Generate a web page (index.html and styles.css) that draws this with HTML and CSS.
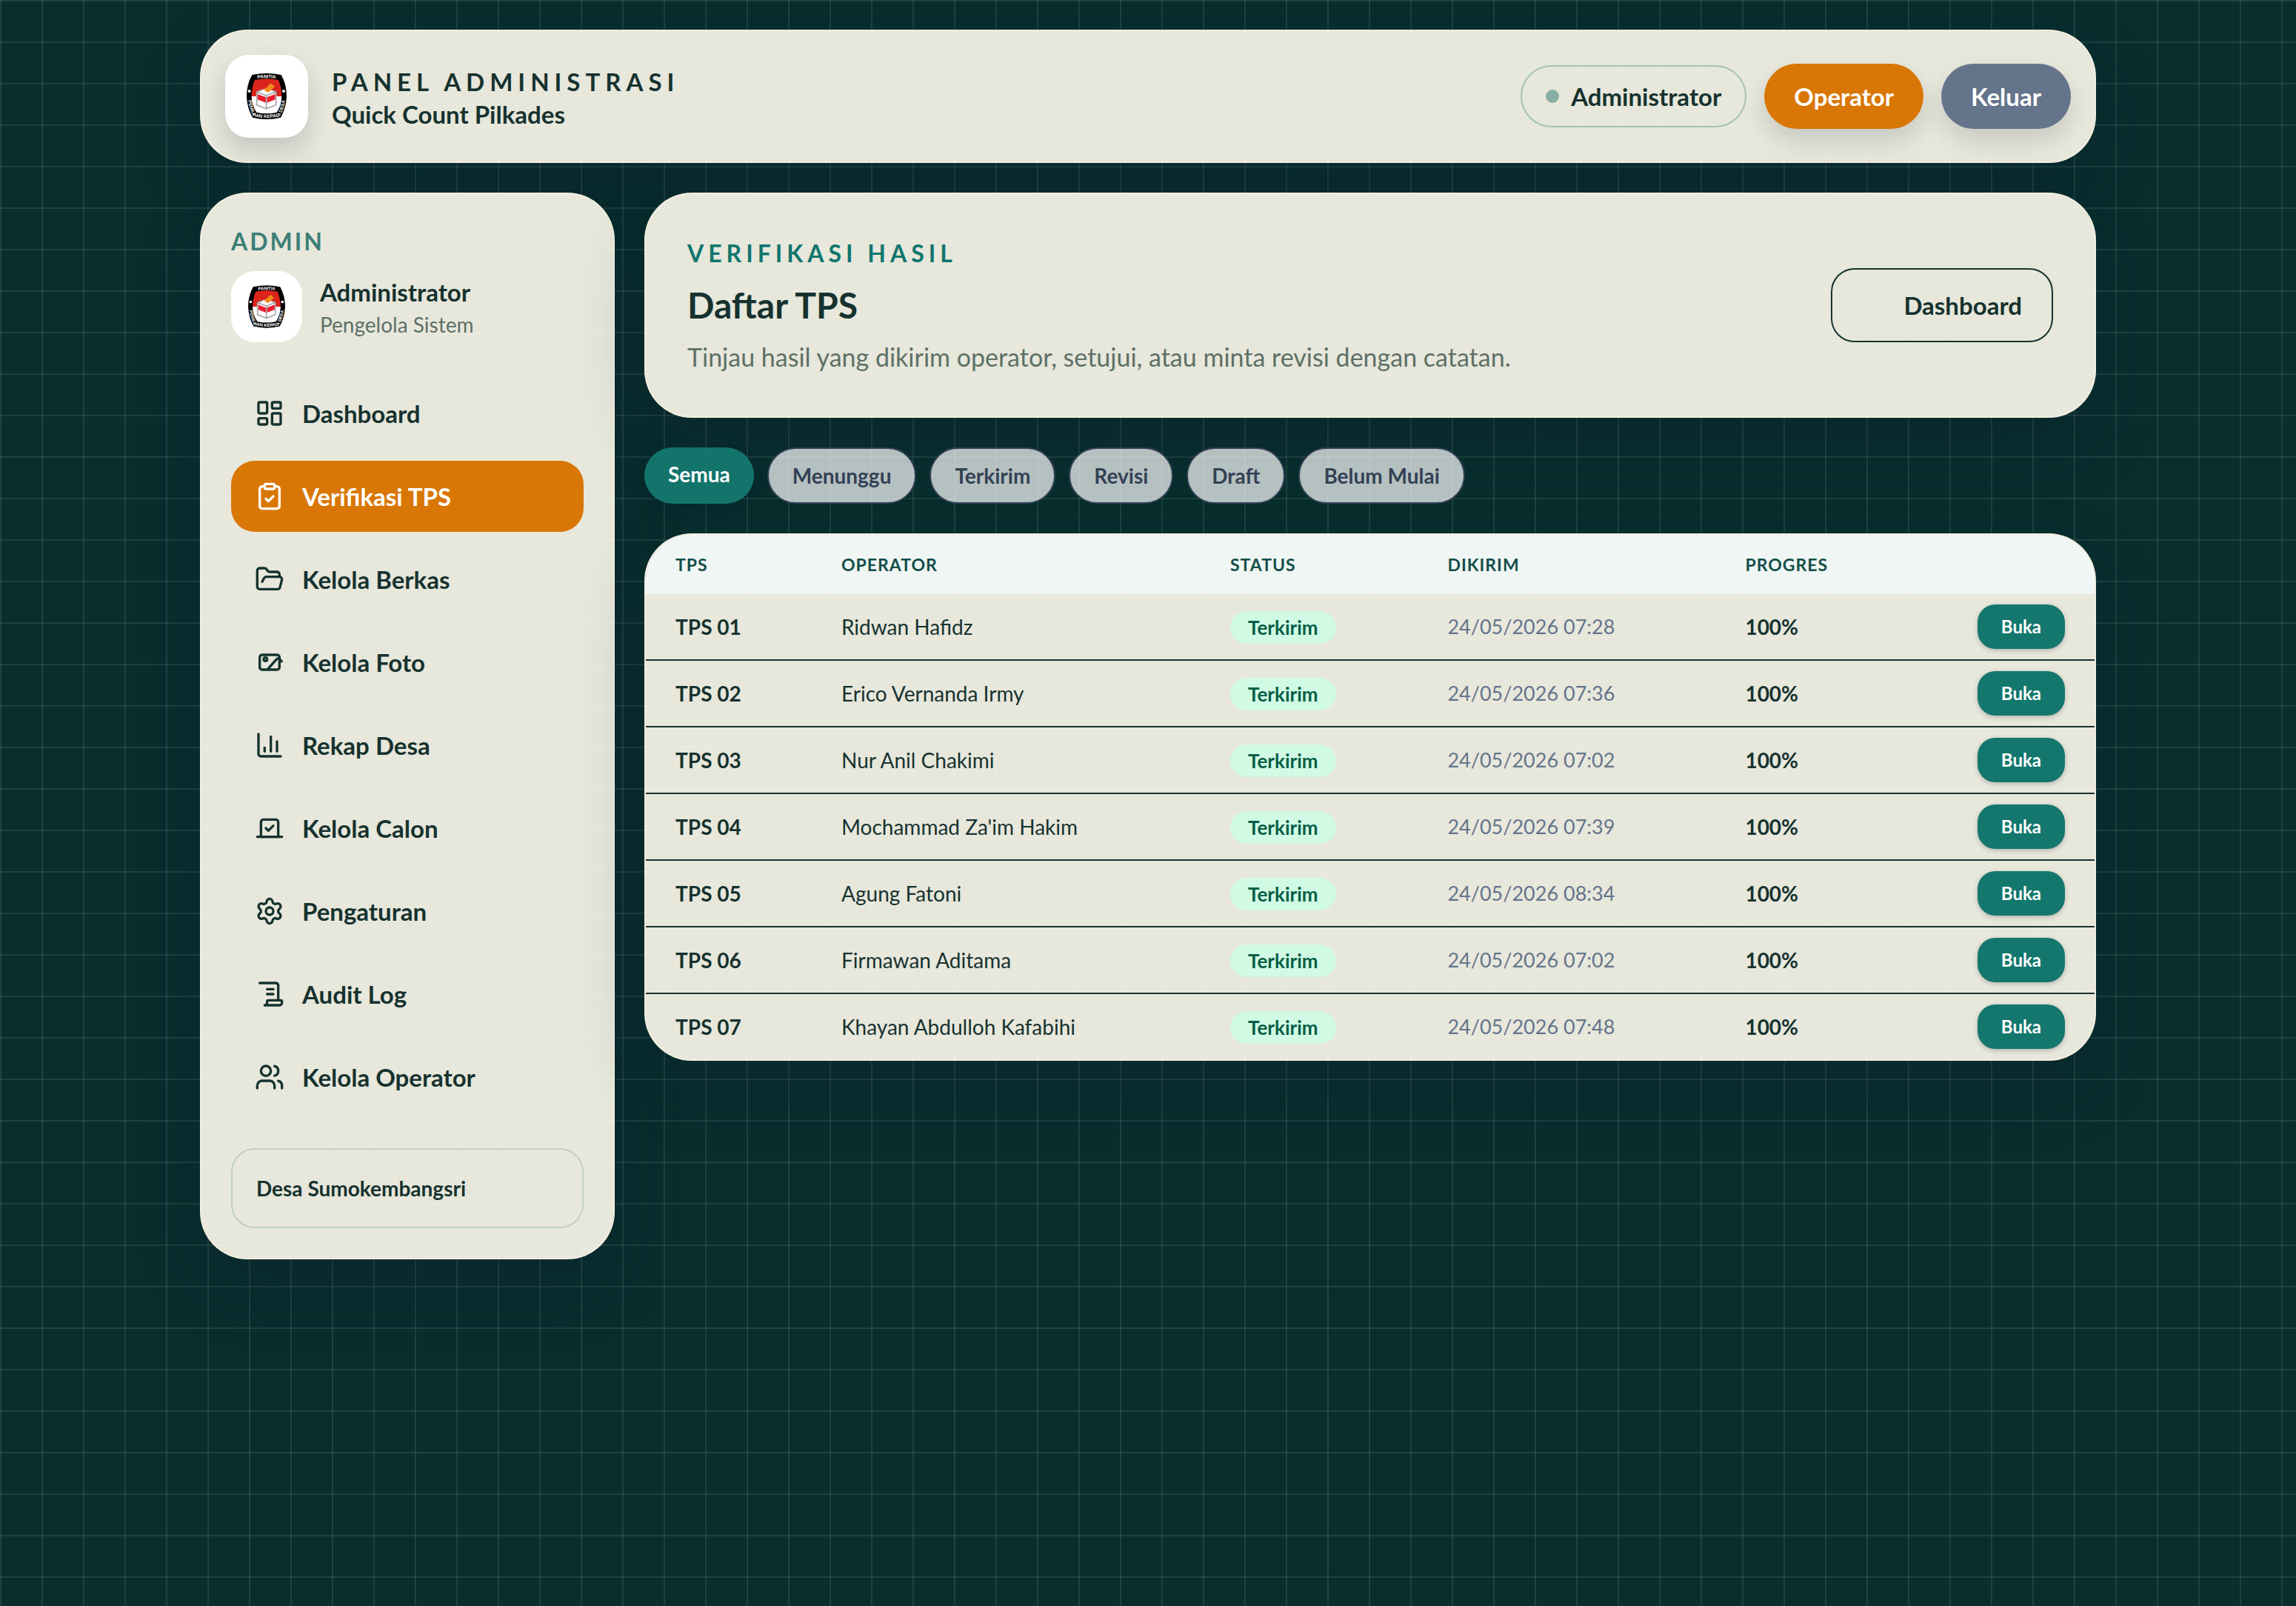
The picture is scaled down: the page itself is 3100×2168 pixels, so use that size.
FILE: index.html
```html
<!DOCTYPE html>
<html lang="id">
<head>
    <meta charset="utf-8">
    <meta name="viewport" content="width=device-width, initial-scale=1">
    <title>Daftar TPS - Quick Count Pilkades</title>
    <link rel="stylesheet" href="styles.css">
</head>
<body>
    <div class="page">
        <header class="panel topbar">
            <div class="logo-box logo-lg">
                <!-- logo panitia, dipakai lagi di sidebar -->
                <svg class="logo" viewBox="0 0 162 186">
                    <g id="logo">
                        <path d="M22 6Q81 -6 140 6Q162 45 162 93Q160 142 138 179Q81 193 24 179Q2 142 0 93Q0 45 22 6Z" fill="#000"/>
                        <path d="M33 27Q81 17 129 27Q142 60 142 93H20Q20 60 33 27Z" fill="#dc241c"/>
                        <path d="M20 93H142Q142 128 122 158Q81 168 40 158Q20 128 20 93Z" fill="#fff"/>
                        <path d="M41 75L80 60L119 75V128L80 143L41 128Z" fill="#fff"/>
                        <path d="M44 84L78 97V119L44 106ZM116 84L82 97V119L116 106Z" fill="#ed1c2e"/>
                        <path d="M41 75L80 90L119 75V128L80 143L41 128ZM80 90V143M41 75L64 66M119 75L104 69" fill="none" stroke="#a3a3a3" stroke-width="5" stroke-linejoin="round"/>
                        <path d="M70 68L98 40L114 54L88 78Z" fill="#f28a1c"/>
                        <circle cx="11" cy="72" r="6" fill="#fff"/>
                        <circle cx="150" cy="72" r="6" fill="#fff"/>
                        <path id="arc-top" d="M20 24Q81 14 142 24" fill="none"/>
                        <path id="arc-bottom" d="M4 92Q8 142 28 174Q81 187 134 174Q154 142 158 92" fill="none"/>
                        <text class="logo-text"><textPath href="#arc-top" startOffset="50%" text-anchor="middle">PANITIA</textPath></text>
                        <text class="logo-text"><textPath href="#arc-bottom" startOffset="50%" text-anchor="middle">PEMILIHAN KEPALA DESA</textPath></text>
                    </g>
                </svg>
            </div>
            <div class="brand">
                <p class="brand-name">PANEL ADMINISTRASI</p>
                <p class="brand-sub">Quick Count Pilkades</p>
            </div>
            <div class="actions">
                <span class="user-pill"><i class="dot"></i>Administrator</span>
                <a href="#" class="btn btn-orange">Operator</a>
                <button type="button" class="btn btn-slate">Keluar</button>
            </div>
        </header>

        <div class="columns">
            <aside class="panel sidebar">
                <p class="side-title">ADMIN</p>
                <div class="profile">
                    <div class="logo-box logo-sm"><svg class="logo" viewBox="0 0 162 186"><use href="#logo"/></svg></div>
                    <div>
                        <p class="profile-name">Administrator</p>
                        <p class="profile-role">Pengelola Sistem</p>
                    </div>
                </div>
                <nav class="menu">
                    <a href="#">
                        <svg class="icon" viewBox="0 0 24 24"><rect x="3" y="3" width="7" height="9" rx="1"/><rect x="14" y="3" width="7" height="5" rx="1"/><rect x="14" y="12" width="7" height="9" rx="1"/><rect x="3" y="16" width="7" height="5" rx="1"/></svg>
                        Dashboard
                    </a>
                    <a href="#" class="active">
                        <svg class="icon" viewBox="0 0 24 24"><rect x="8" y="2" width="8" height="4" rx="1"/><path d="M16 4h2a2 2 0 0 1 2 2v14a2 2 0 0 1-2 2H6a2 2 0 0 1-2-2V6a2 2 0 0 1 2-2h2"/><path d="m9 14 2 2 4-4"/></svg>
                        Verifikasi TPS
                    </a>
                    <a href="#">
                        <svg class="icon" viewBox="0 0 24 24"><path d="m6 14 1.5-2.9A2 2 0 0 1 9.24 10H20a2 2 0 0 1 1.94 2.5l-1.54 6a2 2 0 0 1-1.95 1.5H4a2 2 0 0 1-2-2V5a2 2 0 0 1 2-2h3.9a2 2 0 0 1 1.69.9l.81 1.2a2 2 0 0 0 1.67.9H18a2 2 0 0 1 2 2v2"/></svg>
                        Kelola Berkas
                    </a>
                    <a href="#">
                        <svg class="icon" viewBox="0 0 24 24"><rect x="4" y="6" width="16" height="12" rx="2"/><circle cx="8.6" cy="9.6" r="1.4"/><path d="M11 17 17.8 9.4a1.4 1.4 0 0 1 2.1 0L21.8 11.2"/></svg>
                        Kelola Foto
                    </a>
                    <a href="#">
                        <svg class="icon" viewBox="0 0 24 24"><path d="M3 3v16a2 2 0 0 0 2 2h16"/><path d="M18 17V9"/><path d="M13 17V5"/><path d="M8 17v-3"/></svg>
                        Rekap Desa
                    </a>
                    <a href="#">
                        <svg class="icon" viewBox="0 0 24 24"><path d="m9 12 2 2 4-4"/><path d="M5 7c0-1.1.9-2 2-2h10a2 2 0 0 1 2 2v12H5V7Z"/><path d="M22 19H2"/></svg>
                        Kelola Calon
                    </a>
                    <a href="#">
                        <svg class="icon" viewBox="0 0 24 24"><path d="M9.671 4.136a2.34 2.34 0 0 1 4.659 0 2.34 2.34 0 0 0 3.319 1.915 2.34 2.34 0 0 1 2.33 4.033 2.34 2.34 0 0 0 0 3.831 2.34 2.34 0 0 1-2.33 4.033 2.34 2.34 0 0 0-3.319 1.915 2.34 2.34 0 0 1-4.659 0 2.34 2.34 0 0 0-3.32-1.915 2.34 2.34 0 0 1-2.33-4.033 2.34 2.34 0 0 0 0-3.831A2.34 2.34 0 0 1 6.35 6.051a2.34 2.34 0 0 0 3.319-1.915"/><circle cx="12" cy="12" r="3"/></svg>
                        Pengaturan
                    </a>
                    <a href="#">
                        <svg class="icon" viewBox="0 0 24 24"><path d="M15 12h-5"/><path d="M15 8h-5"/><path d="M19 17V5a2 2 0 0 0-2-2H4"/><path d="M8 21h12a2 2 0 0 0 2-2v-1a1 1 0 0 0-1-1H11a1 1 0 0 0-1 1v1a2 2 0 0 1-2 2"/></svg>
                        Audit Log
                    </a>
                    <a href="#">
                        <svg class="icon" viewBox="0 0 24 24"><path d="M16 21v-2a4 4 0 0 0-4-4H6a4 4 0 0 0-4 4v2"/><circle cx="9" cy="7" r="4"/><path d="M22 21v-2a4 4 0 0 0-3-3.87"/><path d="M16 3.13a4 4 0 0 1 0 7.75"/></svg>
                        Kelola Operator
                    </a>
                </nav>
                <div class="village">Desa Sumokembangsri</div>
            </aside>

            <main class="main">
                <section class="panel hero">
                    <div>
                        <p class="hero-label">VERIFIKASI HASIL</p>
                        <h1>Daftar TPS</h1>
                        <p class="hero-desc">Tinjau hasil yang dikirim operator, setujui, atau minta revisi dengan catatan.</p>
                    </div>
                    <a href="#" class="btn-outline"><span class="icon-slot"></span>Dashboard</a>
                </section>

                <nav class="tabs">
                    <a href="#" class="active">Semua</a>
                    <a href="#">Menunggu</a>
                    <a href="#">Terkirim</a>
                    <a href="#">Revisi</a>
                    <a href="#">Draft</a>
                    <a href="#">Belum Mulai</a>
                </nav>

                <section class="panel table-panel">
                    <table>
                        <colgroup>
                            <col class="col-tps">
                            <col class="col-operator">
                            <col class="col-status">
                            <col class="col-date">
                            <col class="col-progress">
                            <col>
                        </colgroup>
                        <thead>
                            <tr>
                                <th>TPS</th>
                                <th>OPERATOR</th>
                                <th>STATUS</th>
                                <th>DIKIRIM</th>
                                <th>PROGRES</th>
                                <th></th>
                            </tr>
                        </thead>
                        <tbody>
                            <tr>
                                <td class="strong">TPS 01</td>
                                <td>Ridwan Hafidz</td>
                                <td><span class="badge">Terkirim</span></td>
                                <td class="date">24/05/2026 07:28</td>
                                <td class="strong">100%</td>
                                <td class="open"><a href="#" class="btn-open">Buka</a></td>
                            </tr>
                            <tr>
                                <td class="strong">TPS 02</td>
                                <td>Erico Vernanda Irmy</td>
                                <td><span class="badge">Terkirim</span></td>
                                <td class="date">24/05/2026 07:36</td>
                                <td class="strong">100%</td>
                                <td class="open"><a href="#" class="btn-open">Buka</a></td>
                            </tr>
                            <tr>
                                <td class="strong">TPS 03</td>
                                <td>Nur Anil Chakimi</td>
                                <td><span class="badge">Terkirim</span></td>
                                <td class="date">24/05/2026 07:02</td>
                                <td class="strong">100%</td>
                                <td class="open"><a href="#" class="btn-open">Buka</a></td>
                            </tr>
                            <tr>
                                <td class="strong">TPS 04</td>
                                <td>Mochammad Za'im Hakim</td>
                                <td><span class="badge">Terkirim</span></td>
                                <td class="date">24/05/2026 07:39</td>
                                <td class="strong">100%</td>
                                <td class="open"><a href="#" class="btn-open">Buka</a></td>
                            </tr>
                            <tr>
                                <td class="strong">TPS 05</td>
                                <td>Agung Fatoni</td>
                                <td><span class="badge">Terkirim</span></td>
                                <td class="date">24/05/2026 08:34</td>
                                <td class="strong">100%</td>
                                <td class="open"><a href="#" class="btn-open">Buka</a></td>
                            </tr>
                            <tr>
                                <td class="strong">TPS 06</td>
                                <td>Firmawan Aditama</td>
                                <td><span class="badge">Terkirim</span></td>
                                <td class="date">24/05/2026 07:02</td>
                                <td class="strong">100%</td>
                                <td class="open"><a href="#" class="btn-open">Buka</a></td>
                            </tr>
                            <tr>
                                <td class="strong">TPS 07</td>
                                <td>Khayan Abdulloh Kafabihi</td>
                                <td><span class="badge">Terkirim</span></td>
                                <td class="date">24/05/2026 07:48</td>
                                <td class="strong">100%</td>
                                <td class="open"><a href="#" class="btn-open">Buka</a></td>
                            </tr>
                        </tbody>
                    </table>
                </section>
            </main>
        </div>
    </div>
</body>
</html>
```
FILE: styles.css
```css
* {
    box-sizing: border-box;
}

body {
    margin: 0;
    min-height: 100vh;
    font-family: Lato, "Liberation Sans", sans-serif;
    font-size: 28px;
    line-height: 40px;
    color: #16322f;
    background-color: #082e2e;
    background-image:
        linear-gradient(rgba(255, 255, 255, 0.09) 2px, transparent 2px),
        linear-gradient(90deg, rgba(255, 255, 255, 0.09) 2px, transparent 2px);
    background-size: 56px 56px;
}

p, h1 {
    margin: 0;
}

a {
    color: inherit;
    text-decoration: none;
}

.page {
    max-width: 2560px;
    margin: 0 auto;
    padding: 40px 0;
}

.panel {
    border: 2px solid rgba(255, 247, 230, 0.45);
    border-radius: 64px;
    background-color: rgba(251, 247, 234, 0.92);
    box-shadow: 0 36px 90px rgba(15, 23, 42, 0.24);
}

/* header */
.topbar {
    display: flex;
    align-items: center;
    gap: 32px;
    padding: 32px;
}

.logo-box {
    display: flex;
    align-items: center;
    justify-content: center;
    flex: none;
    border-radius: 32px;
    background-color: #fff;
}

.logo-lg {
    width: 112px;
    height: 112px;
    box-shadow: 0 16px 32px rgba(15, 23, 42, 0.16);
}

.logo-sm {
    width: 96px;
    height: 96px;
}

.logo {
    width: 54px;
    height: 62px;
}

.logo-sm .logo {
    width: 50px;
    height: 58px;
}

.logo-text {
    font-family: "Liberation Sans", sans-serif;
    font-size: 19px;
    font-weight: bold;
    fill: #fff;
}

.brand-name {
    font-size: 33px;
    font-weight: 700;
    line-height: 48px;
    letter-spacing: 7px;
}

.brand-sub {
    font-size: 33px;
    font-weight: 700;
}

.actions {
    display: flex;
    align-items: center;
    gap: 24px;
    margin-left: auto;
}

.user-pill, .btn {
    display: flex;
    align-items: center;
    border-radius: 44px;
    font-family: inherit;
    font-size: 33px;
    font-weight: 700;
    line-height: 48px;
}

.user-pill {
    gap: 16px;
    padding: 16px 32px;
    border: 2px solid #a6c2b6;
}

.dot {
    width: 18px;
    height: 18px;
    border-radius: 50%;
    background-color: #88aea4;
}

.btn {
    padding: 20px 40px;
    border: 0;
    color: #fff;
    cursor: pointer;
    box-shadow: 0 16px 32px rgba(15, 23, 42, 0.14);
}

.btn-orange {
    background-color: #d97706;
}

.btn-slate {
    background-color: #64748b;
}

.columns {
    display: grid;
    grid-template-columns: 560px minmax(0, 1fr);
    align-items: start;
    gap: 40px;
    margin-top: 40px;
}

/* sidebar */
.sidebar {
    padding: 40px;
}

.side-title {
    font-size: 32px;
    font-weight: 700;
    line-height: 48px;
    letter-spacing: 3px;
    color: #3c7f76;
}

.profile {
    display: flex;
    align-items: center;
    gap: 24px;
    margin: 16px 0 48px;
}

.profile-name {
    font-size: 33px;
    font-weight: 700;
    line-height: 48px;
}

.profile-role {
    color: #5d7067;
}

.menu {
    display: flex;
    flex-direction: column;
    gap: 16px;
}

.menu a {
    display: flex;
    align-items: center;
    gap: 24px;
    padding: 24px 32px;
    border-radius: 32px;
    font-size: 33px;
    font-weight: 700;
    line-height: 48px;
}

.menu a.active {
    background-color: #d97706;
    color: #fff;
}

.icon {
    width: 40px;
    height: 40px;
    fill: none;
    stroke: currentColor;
    stroke-width: 2;
    stroke-linecap: round;
    stroke-linejoin: round;
}

.village {
    margin-top: 48px;
    padding: 32px;
    border: 2px solid #c0d0c5;
    border-radius: 32px;
    font-weight: 700;
}

/* judul halaman */
.hero {
    display: flex;
    align-items: center;
    justify-content: space-between;
    gap: 40px;
    padding: 56px;
}

.hero-label {
    font-size: 32px;
    font-weight: 700;
    line-height: 48px;
    letter-spacing: 6px;
    color: #0f766e;
}

.hero h1 {
    margin: 16px 0;
    font-size: 48px;
    font-weight: 700;
    line-height: 60px;
}

.hero-desc {
    font-size: 34px;
    line-height: 48px;
    color: #5d7067;
}

.btn-outline {
    display: flex;
    align-items: center;
    flex: none;
    gap: 16px;
    padding: 24px 40px;
    border: 2px solid #16322f;
    border-radius: 32px;
    font-size: 33px;
    font-weight: 700;
    line-height: 48px;
}

.icon-slot {
    width: 40px;
    height: 40px;
}

.tabs {
    display: flex;
    flex-wrap: wrap;
    gap: 18px;
    margin: 40px 0;
}

.tabs a {
    padding: 16px 32px;
    border: 2px solid #334155;
    border-radius: 38px;
    background-color: rgba(255, 255, 255, 0.7);
    color: #334155;
    font-weight: 700;
}

.tabs a.active {
    border: 0;
    background-color: rgba(20, 120, 111, 0.95);
    color: #fff;
    box-shadow: 0 8px 24px rgba(15, 23, 42, 0.2);
}

/* tabel */
.table-panel {
    overflow: hidden;
}

table {
    width: 100%;
    table-layout: fixed;
    border-collapse: separate;
    border-spacing: 0;
}

.col-tps {
    width: 224px;
}

.col-operator {
    width: 525px;
}

.col-status {
    width: 15%;
}

.col-date {
    width: 402px;
}

.col-progress {
    width: 15%;
}

th {
    height: 80px;
    padding: 0 40px;
    background-color: #f0f6f4;
    color: #134e4a;
    font-size: 23px;
    font-weight: 700;
    letter-spacing: 1px;
    text-align: left;
}

td {
    height: 90px;
    padding: 0 40px;
    border-bottom: 2px solid #16322f;
}

tr:last-child td {
    height: 88px;
    border-bottom: 0;
}

.strong {
    font-weight: 700;
}

.date {
    color: #64748b;
    font-size: 27px;
}

.open {
    text-align: right;
}

.badge {
    display: inline-block;
    padding: 2px 24px;
    border-radius: 22px;
    background-color: #d1fae5;
    color: #065f46;
    font-size: 26px;
    font-weight: 700;
    vertical-align: middle;
}

.btn-open {
    display: inline-block;
    padding: 10px 32px;
    border-radius: 24px;
    background-color: #14776e;
    color: #fff;
    font-size: 24px;
    font-weight: 700;
    vertical-align: middle;
    box-shadow: 0 2px 6px rgba(15, 23, 42, 0.25);
}
```
